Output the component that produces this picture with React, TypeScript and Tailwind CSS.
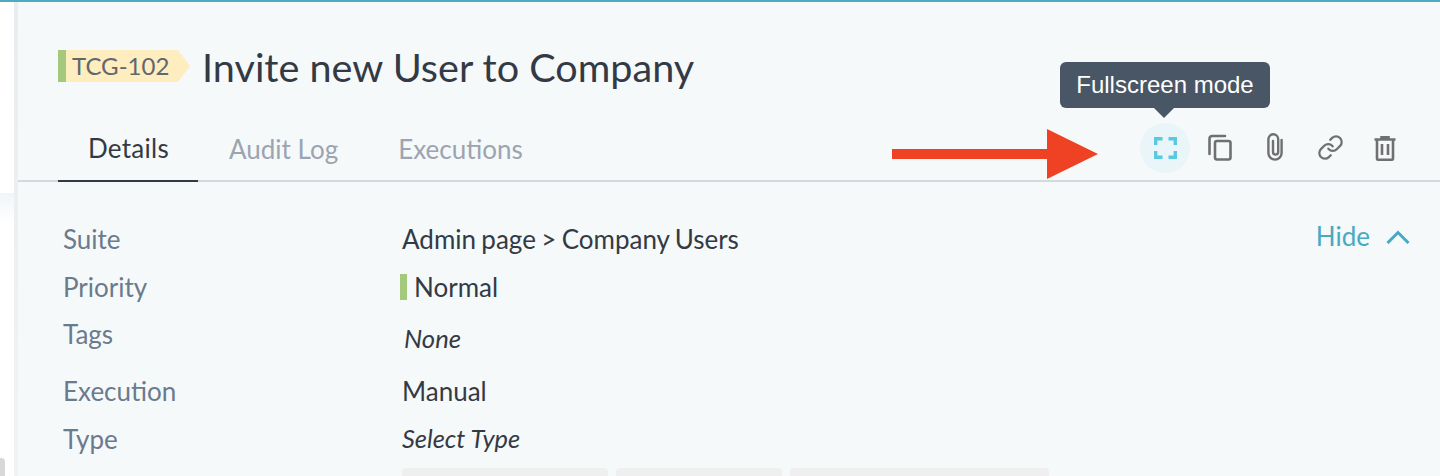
import { Link } from 'lucide-react'

function Row({ label, className, children }: { label: string; className: string; children: React.ReactNode }) {
  return (
    <div className={`flex items-center ${className}`}>
      <div className="w-[339px] text-[#6b7a8d]">{label}</div>
      {children}
    </div>
  )
}

function FullscreenIcon() {
  return (
    <svg width="23" height="22" viewBox="0 0 23 22" fill="none" stroke="#5bc8e2" strokeWidth="3.4">
      <path d="M1.7 8V1.7H8.5M14.5 1.7H21.3V8M21.3 14V20.3H14.5M8.5 20.3H1.7V14" />
    </svg>
  )
}

function CopyIcon() {
  return (
    <svg width="24" height="27" viewBox="0 0 24 27" fill="none" stroke="#707070" strokeWidth="2.6" strokeLinecap="round">
      <path d="M17 2H4a2.5 2.5 0 0 0-2.5 2.5V20" />
      <rect x="7" y="7" width="15.5" height="18.5" rx="2" />
    </svg>
  )
}

function ClipIcon() {
  return (
    <svg width="16" height="28" viewBox="0 0 16 28" fill="none" stroke="#707070" strokeWidth="2.4" strokeLinecap="round">
      <path d="M14.6 7V20a6.6 6.6 0 0 1-13.2 0V6.2a4.9 4.9 0 0 1 9.8 0V19a2.6 2.6 0 0 1-5.2 0V8" />
    </svg>
  )
}

function TrashIcon() {
  return (
    <svg width="22" height="25" viewBox="0 0 22 25" fill="none" stroke="#707070" strokeWidth="2.6">
      <path d="M0.5 3.5H21.5M7.5 3.5V1.3H14.5V3.5" />
      <path d="M3 4V22.5a1.2 1.2 0 0 0 1.2 1.2H17.8a1.2 1.2 0 0 0 1.2-1.2V4" />
      <path d="M8 8V19M14 8V19" />
    </svg>
  )
}

export default function App() {
  return (
    <div className="h-[476px] w-[1440px] overflow-hidden bg-[#f5f9fa] font-['Lato',sans-serif] text-[26px] text-[#343a45]">
      <div className="h-[2px] bg-[#4fa9c0]" />
      <div className="flex h-[474px]">
        <div className="flex w-[14px] shrink-0 flex-col bg-white">
          <div className="h-[191px]" />
          <div className="h-[30px] bg-gradient-to-b from-[#f1f5f7] to-white" />
          <div className="h-[235px]" />
          <div className="h-[18px] w-[5px] rounded-tr bg-[#d8d8d8]" />
        </div>
        <div className="w-[4px] shrink-0 bg-gradient-to-b from-[#e8edf1] to-[#f1f2f3]" />
        <main className="relative min-w-0 flex-1">
          <div className="flex h-[128px] items-start pl-[40px] pt-[48px]">
            <div className="flex h-[32px] w-[132px] items-center">
              <div className="h-full w-[8px] bg-[#a5c97c]" />
              <div className="flex h-full w-[112px] items-center bg-[#fdedbf] pl-[6px] text-[24px] text-[#62666d]">TCG-102</div>
              <div className="h-0 w-0 border-y-[16px] border-l-[12px] border-y-transparent border-l-[#fdedbf]" />
            </div>
            <h1 className="ml-[12px] mt-[-6px] text-[39.6px] leading-[46px] font-normal">Invite new User to Company</h1>
          </div>

          <div className="flex h-[52px] items-stretch border-b-2 border-[#d5d9df] pl-[40px]">
            <div className="-mb-[2px] flex h-[52px] w-[140px] items-center justify-center border-b-2 border-[#343a45] pb-[13px] pl-[1px] tracking-[0.3px]">Details</div>
            <div className="ml-[31px] flex items-center pb-[11px] text-[#9ca4b0]">Audit Log</div>
            <div className="ml-[60px] flex items-center pb-[11px] text-[#9ca4b0]">Executions</div>
            <div className="ml-auto mr-[40px] flex items-center pb-[14px]">
              <div className="flex h-[50px] w-[50px] items-center justify-center rounded-full bg-[#e9f5f9]">
                <FullscreenIcon />
              </div>
              <div className="mb-[2px] ml-[15px] flex w-[30px] justify-center"><CopyIcon /></div>
              <div className="mb-[3px] ml-[25px] flex w-[30px] justify-center"><ClipIcon /></div>
              <div className="mb-[1px] ml-[25px] flex w-[30px] justify-center"><Link size={27} strokeWidth={2} color="#707070" /></div>
              <div className="ml-[25px] flex w-[30px] justify-center"><TrashIcon /></div>
            </div>
          </div>

          <div className="flex flex-col pl-[45px] pr-[30px] pt-[33px]">
            <Row label="Suite" className="h-[48px]">
              <span className="[word-spacing:-1.3px]">Admin page &gt; Company Users</span>
              <span className="ml-auto mt-[-6px] flex items-center text-[#48a9c3]">
                Hide
                <svg className="ml-[16px] mt-[1px]" width="24" height="14" viewBox="0 0 24 14" fill="none" stroke="#48a9c3" strokeWidth="3">
                  <path d="M1.5 13L12 2.5L22.5 13" />
                </svg>
              </span>
            </Row>
            <Row label="Priority" className="h-[48px]">
              <span className="ml-[-2px] mr-[7px] h-[26px] w-[7px] bg-[#a5c97c]" />
              <span>Normal</span>
            </Row>
            <Row label="Tags" className="h-[56px] items-start pt-[4px]">
              <span className="ml-[2px] mt-[4px] text-[25.7px] italic">None</span>
            </Row>
            <Row label="Execution" className="h-[48px]">
              <span>Manual</span>
            </Row>
            <Row label="Type" className="h-[48px]">
              <span className="mt-[-2px] text-[25.4px] italic">Select Type</span>
            </Row>
            <div className="ml-[339px] mt-[5px] flex gap-[8px]">
              <div className="h-[30px] w-[206px] rounded bg-[#efefef]" />
              <div className="h-[30px] w-[166px] rounded bg-[#efefef]" />
              <div className="h-[30px] w-[259px] rounded bg-[#efefef]" />
            </div>
          </div>

          {/* tooltip and annotation arrow lie over the page */}
          <div className="absolute left-[1042px] top-[60px] flex h-[46px] w-[210px] items-center justify-center rounded-[6px] bg-[#495665] font-['Liberation_Sans',sans-serif] text-[24px] text-white">
            Fullscreen mode
            <div className="absolute left-[94px] top-[46px] h-0 w-0 border-x-[10px] border-t-[10px] border-x-transparent border-t-[#495665]" />
          </div>
          <svg className="absolute left-[874px] top-[126px]" width="210" height="52" viewBox="0 0 210 52" fill="#ef4123">
            <path d="M0 21H155V1L206 26L155 51V31H0Z" />
          </svg>
        </main>
      </div>
    </div>
  )
}
